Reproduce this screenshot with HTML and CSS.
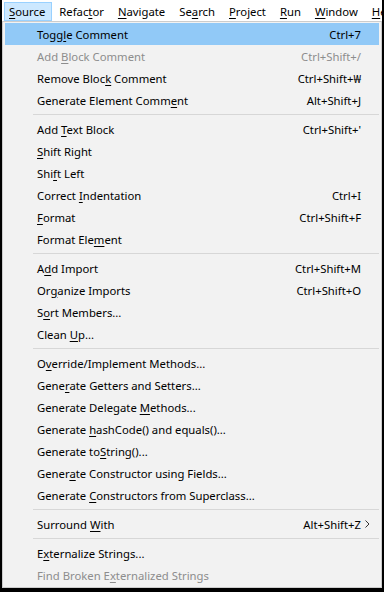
FILE: index.html
```html
<!DOCTYPE html>
<html lang="en">
<head>
  <meta charset="UTF-8" />
  <meta name="viewport" content="width=device-width, initial-scale=1.0"/>
  <title>Source menu</title>
  <link rel="stylesheet" href="styles.css">
</head>
<body>
  <div class="screen">
    <!-- MENU BAR -->
    <nav class="menubar">
      <span class="menu active"><u>S</u>ource</span>
      <span class="menu">Refac<u>t</u>or</span>
      <span class="menu"><u>N</u>avigate</span>
      <span class="menu">Se<u>a</u>rch</span>
      <span class="menu"><u>P</u>roject</span>
      <span class="menu"><u>R</u>un</span>
      <span class="menu"><u>W</u>indow</span>
      <span class="menu"><u>H</u>elp</span>
    </nav>

    <!-- SOURCE DROPDOWN -->
    <div class="dropdown">
      <div class="item hover"><span class="label">Togg<u>l</u>e Comment</span><span class="key">Ctrl+7</span></div>
      <div class="item disabled"><span class="label">Add <u>B</u>lock Comment</span><span class="key">Ctrl+Shift+/</span></div>
      <div class="item"><span class="label">Remove Bloc<u>k</u> Comment</span><span class="key">Ctrl+Shift+₩</span></div>
      <div class="item"><span class="label">Generate Element Comm<u>e</u>nt</span><span class="key">Alt+Shift+J</span></div>
      <div class="sep"></div>
      <div class="item"><span class="label">Add <u>T</u>ext Block</span><span class="key">Ctrl+Shift+'</span></div>
      <div class="item"><span class="label"><u>S</u>hift Right</span></div>
      <div class="item"><span class="label">Shi<u>f</u>t Left</span></div>
      <div class="item"><span class="label">Correct <u>I</u>ndentation</span><span class="key">Ctrl+I</span></div>
      <div class="item"><span class="label"><u>F</u>ormat</span><span class="key">Ctrl+Shift+F</span></div>
      <div class="item"><span class="label">Format Ele<u>m</u>ent</span></div>
      <div class="sep"></div>
      <div class="item"><span class="label">A<u>d</u>d Import</span><span class="key">Ctrl+Shift+M</span></div>
      <div class="item"><span class="label">Or<u>g</u>anize Imports</span><span class="key">Ctrl+Shift+O</span></div>
      <div class="item"><span class="label">S<u>o</u>rt Members...</span></div>
      <div class="item"><span class="label">Clean <u>U</u>p...</span></div>
      <div class="sep"></div>
      <div class="item"><span class="label">O<u>v</u>erride/Implement Methods...</span></div>
      <div class="item"><span class="label">Gene<u>r</u>ate Getters and Setters...</span></div>
      <div class="item"><span class="label">Generate Delegate <u>M</u>ethods...</span></div>
      <div class="item"><span class="label">Generate <u>h</u>ashCode() and equals()...</span></div>
      <div class="item"><span class="label">Generate to<u>S</u>tring()...</span></div>
      <div class="item"><span class="label">Gener<u>a</u>te Constructor using Fields...</span></div>
      <div class="item"><span class="label">Generate <u>C</u>onstructors from Superclass...</span></div>
      <div class="sep"></div>
      <div class="item"><span class="label">Surround <u>W</u>ith</span><span class="key">Alt+Shift+Z</span><span class="arrow"><svg width="5" height="8" viewBox="0 0 5 8"><path d="M0.5 0.5 L4 4 L0.5 7.5" fill="none" stroke="#333" stroke-width="1"/></svg></span></div>
      <div class="sep"></div>
      <div class="item"><span class="label">E<u>x</u>ternalize Strings...</span></div>
      <div class="item disabled"><span class="label">Find Broken E<u>x</u>ternalized Strings</span></div>
    </div>
  </div>
</body>
</html>
```

FILE: styles.css
```css
html, body {
  margin: 0;
  background-color: #000;
}

body {
  font-family: "Noto Sans", "Noto Sans CJK KR", sans-serif;
  font-size: 11.3px;
  color: #000;
  width: 384px;
  height: 592px;
  overflow: hidden;
}

u {
  text-decoration: underline;
  text-underline-offset: 2px;
}

.screen {
  width: 380px;
  height: 588px;
  margin-left: 2px;
  background-color: #fff;
  display: flex;
  flex-direction: column;
}

.menubar {
  display: flex;
  height: 22px;
  padding-left: 2px;
  white-space: nowrap;
  overflow: hidden;
}

.menu {
  box-sizing: border-box;
  height: 19px;
  margin-top: 2px;
  padding: 0 6px 0 4px;
  line-height: 17px;
  border: 1px solid transparent;
}

.menu + .menu {
  margin-left: 2px;
}

.menu.active {
  background-color: #cce8ff;
  border-color: #99d1ff;
}

.dropdown {
  flex: 1;
  box-sizing: border-box;
  background-color: #f2f2f2;
  border: 1px solid #cccccc;
  padding: 1px 2px;
}

.item {
  display: grid;
  grid-template-columns: 32px 1fr auto 18px;
  align-items: center;
  height: 22px;
  white-space: nowrap;
}

.item .label {
  grid-column: 2;
}

.item .key {
  grid-column: 3;
}

.item .arrow {
  grid-column: 4;
  display: flex;
  padding-left: 4px;
}

.item.hover {
  background-color: #91c9f7;
}

.item.disabled {
  color: #8d8d8d;
}

.sep {
  height: 1px;
  margin: 3px 0 3px 28px;
  background-color: #d7d7d7;
}
```
